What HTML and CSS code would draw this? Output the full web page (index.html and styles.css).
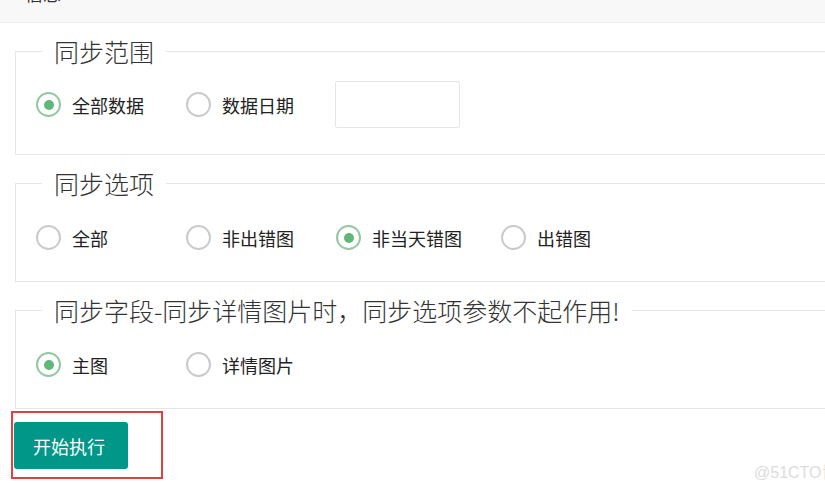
FILE: index.html
```html
<!DOCTYPE html>
<html lang="zh-CN">
  <head>
    <meta charset="UTF-8" />
    <title>同步设置</title>
    <link rel="stylesheet" href="styles.css">
  </head>
  <body>
    <div class="panel-head">
      <span class="panel-title">信息</span>
    </div>

    <form class="sync-form">
      <!-- 同步范围 -->
      <fieldset class="group">
        <legend>同步范围</legend>
        <div class="row row-date">
          <label class="radio checked"><i class="radio-icon"></i>全部数据</label>
          <label class="radio"><i class="radio-icon"></i>数据日期</label>
          <input type="text" class="date-input" />
        </div>
      </fieldset>

      <!-- 同步选项 -->
      <fieldset class="group">
        <legend>同步选项</legend>
        <div class="row">
          <label class="radio"><i class="radio-icon"></i>全部</label>
          <label class="radio"><i class="radio-icon"></i>非出错图</label>
          <label class="radio checked"><i class="radio-icon"></i>非当天错图</label>
          <label class="radio"><i class="radio-icon"></i>出错图</label>
        </div>
      </fieldset>

      <!-- 同步字段 -->
      <fieldset class="group">
        <legend>同步字段-同步详情图片时，同步选项参数不起作用!</legend>
        <div class="row">
          <label class="radio checked"><i class="radio-icon"></i>主图</label>
          <label class="radio"><i class="radio-icon"></i>详情图片</label>
        </div>
      </fieldset>

      <div class="mark-box">
        <button type="button" class="btn-run">开始执行</button>
      </div>
    </form>

    <div class="watermark">@51CTO博客</div>
  </body>
</html>
```

FILE: styles.css
```css
/* General */
body {
  margin: 0;
  background: #fff;
  color: #333;
  font-family: "Noto Sans CJK SC", "Microsoft YaHei", sans-serif;
  overflow: hidden;
  height: 483px;
  position: relative;
}

.panel-head {
  height: 22px;
  background: #f8f8f8;
  border-bottom: 1px solid #eee;
  overflow: hidden;
  padding-left: 25px;
}

.panel-title {
  display: block;
  font-size: 18px;
  line-height: 24px;
  margin-top: -19px;
  color: #333;
}

/* Form */
.sync-form {
  padding-left: 15px;
}

.group {
  margin: 14px -40px 0 0;
  padding: 0 20px 20px;
  border: 1px solid #e6e6e6;
  border-right: none;
}

.group legend {
  margin-left: 6px;
  padding: 0 12px;
  font-size: 25px;
  line-height: 28px;
  color: #333;
  font-weight: 300;
}

.row {
  display: flex;
  align-items: center;
  height: 47px;
  margin-top: 17px;
}

.row-date {
  margin-top: 16px;
  margin-bottom: 6px;
}

.radio {
  display: inline-flex;
  align-items: center;
  gap: 11px;
  min-width: 111px;
  margin-right: 39px;
  font-size: 18px;
  color: #222;
  cursor: pointer;
}

.radio-icon {
  box-sizing: border-box;
  width: 25px;
  height: 25px;
  border: 2px solid #cacaca;
  border-radius: 50%;
  display: inline-flex;
  align-items: center;
  justify-content: center;
}

.radio.checked .radio-icon {
  border-color: #94c8a0;
}

.radio.checked .radio-icon::after {
  content: "";
  width: 10px;
  height: 10px;
  border-radius: 50%;
  background: #5fb878;
}

.date-input {
  box-sizing: border-box;
  width: 125px;
  height: 47px;
  border: 1px solid #e6e6e6;
  border-radius: 2px;
  background: #fff;
  margin-left: -1px;
}

/* Button with red annotation box */
.mark-box {
  display: inline-block;
  margin: 2px 0 0 -4px;
  padding: 9px 33px 8px 1px;
  border: 2px solid #e0403f;
}

.btn-run {
  width: 114px;
  height: 47px;
  padding: 0 0 0 19px;
  text-align: left;
  border: none;
  border-radius: 3px;
  background: #009688;
  color: #fff;
  font-family: inherit;
  font-size: 18px;
  cursor: pointer;
}

.watermark {
  position: absolute;
  left: 754px;
  top: 459px;
  white-space: nowrap;
  font-family: "Liberation Sans", Arial, sans-serif;
  font-size: 16px;
  color: #dcdcdc;
}
```
